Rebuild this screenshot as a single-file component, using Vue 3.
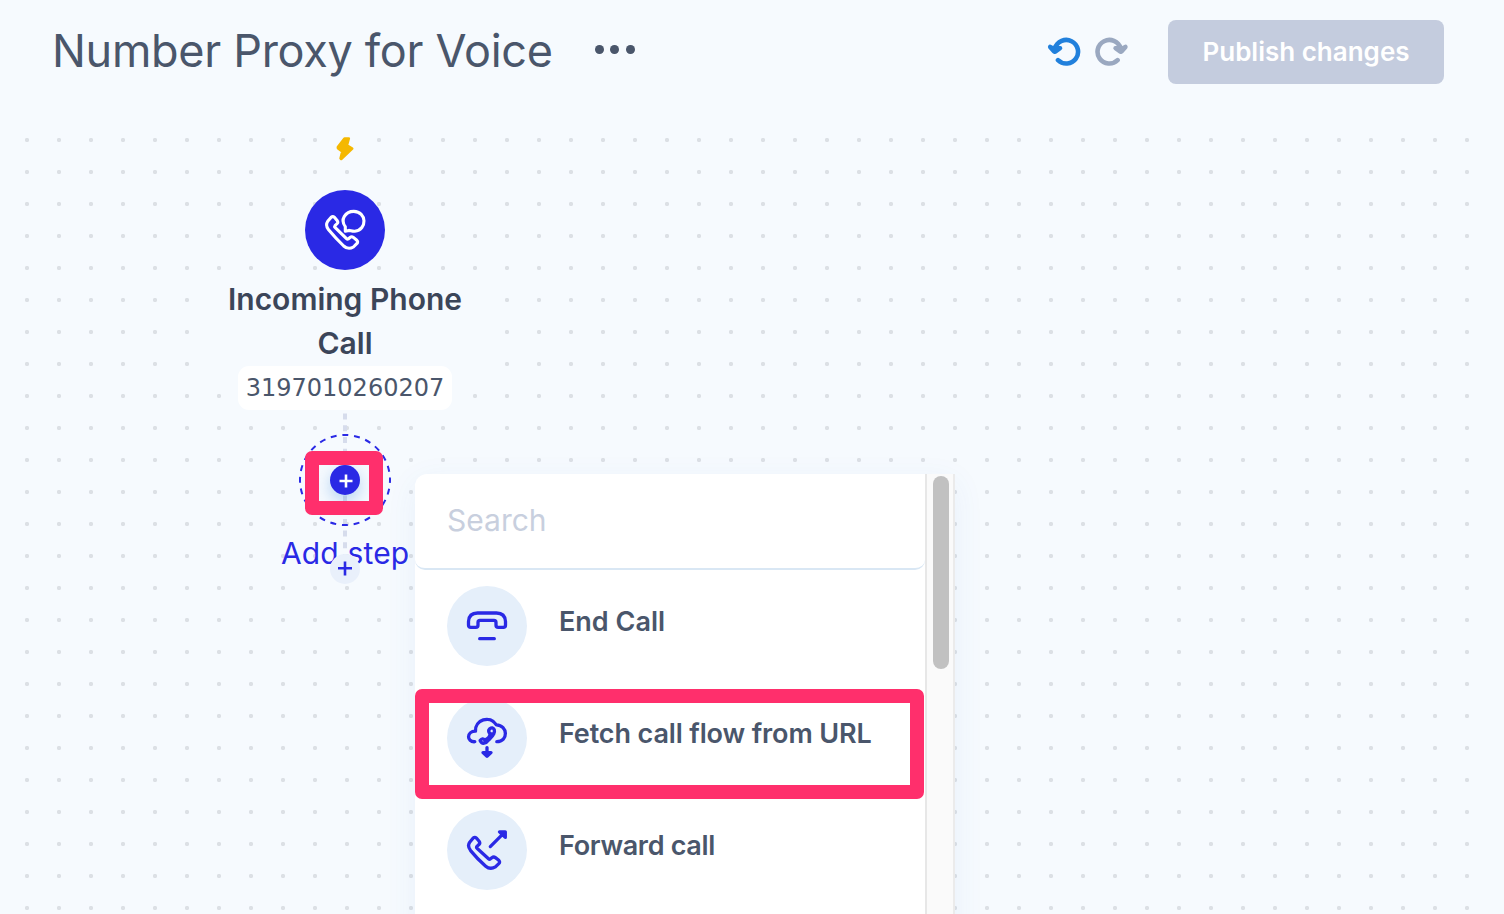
<script setup>
const steps = [
  { label: 'End Call', icon: 'end' },
  { label: 'Fetch call flow from URL', icon: 'fetch' },
  { label: 'Forward call', icon: 'forward' },
]
</script>

<template>
  <div class="page">
    <header class="header">
      <h1 class="title">Number Proxy for Voice</h1>
      <div class="more"><i></i><i></i><i></i></div>
      <div class="history">
        <svg class="undo" width="34" height="32" viewBox="0 0 34 32">
          <path d="M8 12.2A11.8 11.8 0 1 1 11 24.2" />
          <path class="tip" d="M3.2 10.9L7.2 15.6H8.2L13 12.2L8 11.5L6.8 13Z" />
        </svg>
        <svg class="redo" width="34" height="32" viewBox="0 0 34 32">
          <path d="M25.6 12.2A11.8 11.8 0 1 0 22.6 24.2" />
          <path class="tip" d="M30.4 10.9L26.4 15.6H25.4L20.6 12.2L25.6 11.5L26.8 13Z" />
        </svg>
      </div>
      <button class="publish"><span>Publish changes</span></button>
    </header>

    <main class="canvas">
      <section class="trigger">
        <div class="bolt">
          <svg width="20" height="26" viewBox="0 0 20 26">
            <path d="M9.5 2.5H13.8L11.9 9.3L17.2 12.6L6.2 23L5.6 22.4L7.3 15.5L2.9 12.1L2.9 11Z" />
          </svg>
        </div>
        <div class="trigger-icon">
          <svg width="44" height="44" viewBox="0 0 44 44">
            <path d="M8.2 9.2L4.7 13.3C3 15.7 3.6 19.2 5.6 21.8Q12.4 30 20.7 38Q25.2 42 30.4 39L34 35.4Q35.3 33.8 33.8 32.2L30.4 29.4Q28.6 28.1 27 29.5L25.2 31Q24.4 31.5 23.5 30.7L12 19.4Q11.2 18.6 12 17.6L14.2 15.5Q15.4 14.2 14.1 12.4L11.6 9.4Q9.8 7.9 8.2 9.2Z" />
            <path d="M22.3 23.2V18.6C16.8 11.6 22.4 3.4 30.8 3.4C43.8 3.6 44.6 21.6 31.8 23.3C29.3 23.5 27.5 22.5 25.9 22.4Z" />
          </svg>
        </div>
        <div class="name">Incoming Phone<br />Call</div>
        <div class="number">3197010260207</div>
      </section>

      <section class="add">
        <svg class="wire" width="128" height="176" viewBox="0 0 128 176">
          <path class="rail" d="M64 3.6V146" />
          <circle cx="64" cy="70" r="45" />
        </svg>
        <div class="add-label">Add step</div>
        <svg class="plus big" width="30" height="30" viewBox="0 0 30 30"><path d="M16 9.5V22.5M9.5 16H22.5" /></svg>
        <svg class="plus small" width="30" height="30" viewBox="0 0 30 30"><path d="M15 7.5V21.5M8 14.3H22" /></svg>
        <div class="mark mark-plus"></div>
      </section>

      <aside class="picker">
        <div class="list">
          <div class="search"><span>Search</span></div>
          <div v-for="s in steps" :key="s.icon" class="step">
            <div class="badge">
              <svg width="44" height="44" viewBox="0 0 44 44">
                <template v-if="s.icon === 'end'">
                  <path d="M3.5 17.5Q4 9 12.5 9H31.5Q40 9 40.5 17.5V21.3Q40.5 23.4 38.3 23.4H33.2Q31 23.4 31 21.3V18.5Q31 16.4 29 16.4H15Q13 16.4 13 18.5V21.3Q13 23.4 10.8 23.4H5.7Q3.5 23.4 3.5 21.3Z" />
                  <path d="M14.7 34.7H29.3" />
                </template>
                <template v-else-if="s.icon === 'fetch'">
                  <path d="M9.8 25.7C1.5 26.3 1.2 15.2 10.5 15.2C9.8 3.8 25 -1.4 31.4 8.9C43 9.3 43.6 25.6 31.8 25.7" />
                  <path d="M15.1 24.6Q17.6 21.4 19.8 24C22.8 22.8 25 20.5 25 17.7Q22.6 14.8 24.6 12.8Q27.8 10.5 29.3 13.7C30.5 18.2 26.6 21.2 23.6 24C21 27.6 17 28.8 15.1 24.6ZM19.8 24L20.7 26M25 17.7L28.8 17.9" />
                  <path d="M22 31.6V39.8M18 36.6L22 40.2L26 36.6Z" />
                </template>
                <template v-else>
                  <path d="M8.2 10L4.7 14.2C3 16.5 3.6 20 5.6 22.6Q12.4 31 20.7 38.2Q25.2 42 30.4 38.9L33.8 35.6Q35.3 34 33.8 32.3L30.4 29.6Q28.6 28.3 27 29.7L25.2 31Q24.4 31.5 23.5 30.7L12 20.2Q11.2 19.4 12 18.4L14.2 16.3Q15.4 15 14.1 13.2L11.6 10.2Q9.8 8.7 8.2 10Z" />
                  <path d="M25.3 18.6L38.5 5.4M34.5 3.8H40.3V9.4Z" />
                </template>
              </svg>
            </div>
            <span class="step-label" :class="s.icon">{{ s.label }}</span>
            <div v-if="s.icon === 'fetch'" class="mark mark-step"></div>
          </div>
        </div>
        <div class="scroll"><div class="thumb"></div></div>
      </aside>
    </main>
  </div>
</template>

<style>
body { background: #f6fafe; overflow: hidden; }
</style>

<style scoped>
.page {
  width: 1504px;
  height: 914px;
  overflow: hidden;
  background: #f6fafe;
  font-family: Inter, "Liberation Sans", sans-serif;
  color: #4a566b;
  display: flex;
  flex-direction: column;
}
.header {
  height: 124px;
  box-sizing: border-box;
  padding: 20px 60px 0 52px;
  display: flex;
  align-items: flex-start;
  flex: none;
}
.title {
  margin: 0;
  width: 543px;
  font-size: 45px;
  font-weight: 400;
  line-height: 62px;
  letter-spacing: -0.3px;
  white-space: nowrap;
}
.more { display: flex; gap: 6.6px; margin-top: 25px; }
.more i { width: 8.8px; height: 8.8px; border-radius: 50%; background: #4a566b; }
.history { display: flex; gap: 14px; margin: 16px 39px 0 auto; }
.history svg { fill: none; stroke-width: 4.6; stroke-linecap: round; stroke-linejoin: round; }
.undo { stroke: #2180dc; }
.redo { stroke: #9aa8c0; }
.publish {
  width: 276px;
  height: 64px;
  padding: 0;
  border: 0;
  border-radius: 8px;
  background: #c4ccde;
  color: #fff;
  font: 600 26px/64px Inter, sans-serif;
  white-space: nowrap;
}
.canvas {
  position: relative;
  flex: 1;
  margin: 0 21px 0 11px;
  background: radial-gradient(circle at 16px 16px, #dce0e5 1.8px, transparent 2.5px) 0 0 / 32px 32px;
}
.trigger {
  position: absolute;
  left: 190px;
  top: 8px;
  width: 288px;
  display: flex;
  flex-direction: column;
  align-items: center;
}
.bolt { height: 32px; padding-top: 4px; box-sizing: border-box; background: #f6fafe; }
.bolt svg { display: block; fill: #f5b800; stroke: #f5b800; stroke-width: 2.6; stroke-linejoin: round; }
.trigger-icon {
  width: 80px;
  height: 80px;
  margin-top: 26px;
  border-radius: 50%;
  background: #2a29e5;
  display: flex;
  align-items: center;
  justify-content: center;
}
.trigger-icon svg { fill: none; stroke: #fff; stroke-width: 3.1; stroke-linejoin: round; }
.name {
  width: 288px;
  margin-top: 7px;
  height: 89px;
  background: #f6fafe;
  text-align: center;
  font-size: 30px;
  font-weight: 600;
  line-height: 44px;
  color: #3b4559;
  white-space: nowrap;
}
.number {
  width: 214px;
  height: 44px;
  border-radius: 11px;
  background: #fff;
  text-align: center;
  font: 24px/44px "DejaVu Sans", sans-serif;
}
.add { position: absolute; left: 270px; top: 286px; width: 128px; height: 176px; }
.wire { display: block; fill: none; }
.rail { stroke: #d6dcec; stroke-width: 4; stroke-dasharray: 5.9 5.8; }
.wire circle { stroke: #2a29e5; stroke-width: 2; stroke-dasharray: 6 5.78; stroke-dashoffset: 3; }
.add-label {
  position: absolute;
  left: 0;
  top: 121px;
  width: 128px;
  text-align: center;
  font-size: 30px;
  line-height: 44px;
  letter-spacing: 0.15px;
  color: #2a29e5;
  white-space: nowrap;
}
.plus { position: absolute; left: 49px; border-radius: 50%; fill: none; stroke-width: 2.6; }
.big { top: 55px; background: #2a29e5; stroke: #fff; box-shadow: 0 6px 16px rgba(60, 140, 220, 0.35); }
.small { top: 144px; background: #e9f0fb; stroke: #2a29e5; }
.mark { position: absolute; box-sizing: border-box; border: 14px solid #ff2f6c; border-radius: 7px; }
.mark-plus { left: 24px; top: 41px; width: 78px; height: 64px; }
.picker {
  position: absolute;
  left: 404px;
  top: 350px;
  width: 540px;
  height: 520px;
  display: flex;
  overflow: visible;
  border-radius: 12px 0 0 0;
  background: #fff;
  box-shadow: 0 8px 32px rgba(50, 120, 200, 0.07);
}
.list { width: 510px; flex: none; }
.search {
  height: 96px;
  box-sizing: border-box;
  padding-left: 32px;
  border-bottom: 2px solid #d9e7f4;
  border-radius: 12px 0 10px 10px;
  font-size: 30px;
  line-height: 92px;
  color: #c8cfde;
}
.step {
  position: relative;
  height: 112px;
  box-sizing: border-box;
  padding: 16px 0 0 32px;
  display: flex;
  gap: 32px;
}
.badge {
  width: 80px;
  height: 80px;
  border-radius: 50%;
  background: #e5effa;
  display: flex;
  align-items: center;
  justify-content: center;
}
.badge svg { fill: none; stroke: #2a29e5; stroke-width: 3.3; stroke-linecap: round; stroke-linejoin: round; }
.step-label { font-size: 27px; font-weight: 600; line-height: 72px; white-space: nowrap; }
.fetch { letter-spacing: -0.13px; }
.forward { letter-spacing: -0.33px; }
.mark-step { left: 0; top: 7px; width: 509px; height: 110px; }
.scroll {
  width: 30px;
  box-sizing: border-box;
  border-left: 2px solid #e7e7e7;
  border-right: 2px solid #ebebeb;
  background: #fafafa;
  padding: 2px 0 0 6px;
}
.thumb { width: 16px; height: 193px; border-radius: 8px; background: #c1c1c1; }
</style>
